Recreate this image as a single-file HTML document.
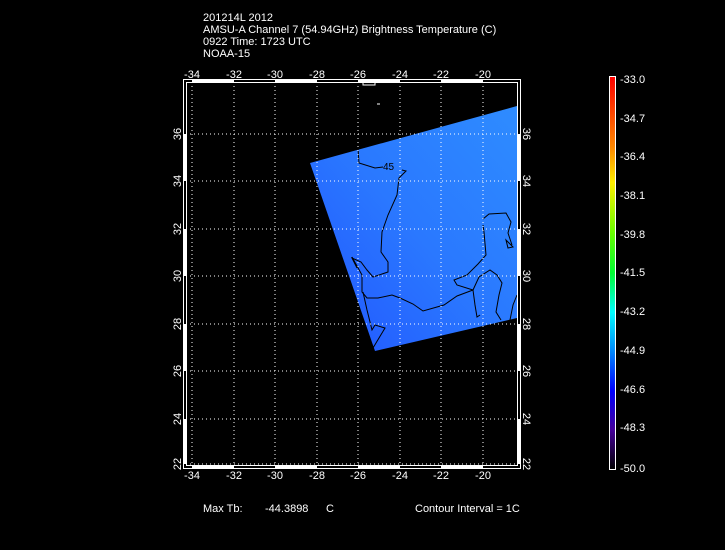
<!DOCTYPE html>
<html><head><style>
html,body{margin:0;padding:0;background:#000;width:725px;height:550px;overflow:hidden}
svg{display:block}
text{font-family:"Liberation Sans",sans-serif;font-size:11px;fill:#fff}
</style></head><body>
<svg width="725" height="550" viewBox="0 0 725 550">
<defs>
<linearGradient id="sw" x1="1" y1="0" x2="0" y2="1">
<stop offset="0" stop-color="#2e8cff"/>
<stop offset="0.5" stop-color="#2a78ff"/>
<stop offset="0.85" stop-color="#2460ff"/>
<stop offset="1" stop-color="#1a40ff"/>
</linearGradient>
<linearGradient id="cb" x1="0" y1="0" x2="0" y2="1">
<stop offset="0" stop-color="#ff0000"/>
<stop offset="0.18" stop-color="#ff8800"/>
<stop offset="0.27" stop-color="#ffee00"/>
<stop offset="0.4" stop-color="#66ff00"/>
<stop offset="0.5" stop-color="#00ff33"/>
<stop offset="0.6" stop-color="#00ffff"/>
<stop offset="0.7" stop-color="#0088ff"/>
<stop offset="0.8" stop-color="#0000ff"/>
<stop offset="0.9" stop-color="#440099"/>
<stop offset="1" stop-color="#000000"/>
</linearGradient>
</defs>
<text x="203" y="21">201214L 2012</text>
<text x="203" y="33">AMSU-A Channel 7 (54.94GHz) Brightness Temperature (C)</text>
<text x="203" y="45">0922 Time: 1723 UTC</text>
<text x="203" y="57">NOAA-15</text>

<polygon points="310,163 517,106 517,318 375,351" fill="url(#sw)"/>
<g fill="none" stroke="#000" stroke-width="1">
<path d="M358,148 L359,163 L375,168 L383,167 M402,170 L406,171 L399,178 L397,195 L388,215 L382,232 L381,252 L388,262 L388,272 L373,277 L367,270 L361,262 L352,258 L357,268"/>
<path d="M352,257 L362,275 L362,292 L367,298 L378,298 L392,295 L400,298 L413,304 L423,311 L444,305 L457,296 L473,290"/>
<path d="M363,292 L367,310 L372,330 L375,325 L385,328 L373,348"/>
<path d="M483,219 L489,214 L506,213 L511,222 L508,233 L512,245 M483,225 L484,232 L486,255 L478,264 L467,275 L454,280 L457,285 L473,290 L475,305 L477,317 L480,315 M473,290 L479,277 L490,270 L497,275 L502,283 L499,295 L496,312 L501,320 M517,295 L513,305 L510,320"/>
<path d="M506,240 L508,248 L513,247 Z"/>
</g>
<text x="383" y="170" style="font-size:10px;fill:#000">45</text>

<g stroke="#fff" stroke-width="1" stroke-dasharray="1,3" fill="none">
<path d="M192,82V466M234,82V466M275,82V466M317,82V466M358,82V466M400,82V466M441,82V466M483,82V466"/>
<path d="M186,134H518M186,181H518M186,229H518M186,276H518M186,324H518M186,371H518M186,419H518M186,464H518"/>
</g>
<rect x="183.5" y="79.5" width="337" height="389" fill="none" stroke="#fff"/>
<rect x="186.5" y="82.5" width="331" height="383" fill="none" stroke="#fff"/>
<g fill="#fff">
<rect x="192" y="80" width="42" height="2"/><rect x="275" y="80" width="42" height="2"/><rect x="358" y="80" width="42" height="2"/><rect x="441" y="80" width="42" height="2"/>
<rect x="192" y="466" width="42" height="2"/><rect x="275" y="466" width="42" height="2"/><rect x="358" y="466" width="42" height="2"/><rect x="441" y="466" width="42" height="2"/>
<rect x="184" y="419" width="2" height="45"/><rect x="184" y="324" width="2" height="47"/><rect x="184" y="229" width="2" height="47"/><rect x="184" y="134" width="2" height="47"/>
<rect x="518" y="419" width="2" height="45"/><rect x="518" y="324" width="2" height="47"/><rect x="518" y="229" width="2" height="47"/><rect x="518" y="134" width="2" height="47"/>
</g>
<path d="M363,81 h12 v4 h-12z M377,104 h3" stroke="#fff" fill="none"/>

<g text-anchor="middle">
<text x="192" y="78">-34</text><text x="234" y="78">-32</text><text x="275" y="78">-30</text><text x="317" y="78">-28</text><text x="358" y="78">-26</text><text x="400" y="78">-24</text><text x="441" y="78">-22</text><text x="483" y="78">-20</text>
<text x="192" y="479">-34</text><text x="234" y="479">-32</text><text x="275" y="479">-30</text><text x="317" y="479">-28</text><text x="358" y="479">-26</text><text x="400" y="479">-24</text><text x="441" y="479">-22</text><text x="483" y="479">-20</text>
</g>
<g text-anchor="middle">
<text transform="translate(181,464) rotate(-90)">22</text><text transform="translate(181,419) rotate(-90)">24</text><text transform="translate(181,371) rotate(-90)">26</text><text transform="translate(181,324) rotate(-90)">28</text><text transform="translate(181,276) rotate(-90)">30</text><text transform="translate(181,229) rotate(-90)">32</text><text transform="translate(181,181) rotate(-90)">34</text><text transform="translate(181,134) rotate(-90)">36</text>
<text transform="translate(523,464) rotate(90)">22</text><text transform="translate(523,419) rotate(90)">24</text><text transform="translate(523,371) rotate(90)">26</text><text transform="translate(523,324) rotate(90)">28</text><text transform="translate(523,276) rotate(90)">30</text><text transform="translate(523,229) rotate(90)">32</text><text transform="translate(523,181) rotate(90)">34</text><text transform="translate(523,134) rotate(90)">36</text>
</g>

<rect x="609.5" y="76.5" width="6" height="393" fill="url(#cb)" stroke="#fff"/>
<g>
<text x="620" y="83">-33.0</text><text x="620" y="122">-34.7</text><text x="620" y="160">-36.4</text><text x="620" y="199">-38.1</text><text x="620" y="238">-39.8</text><text x="620" y="276">-41.5</text><text x="620" y="315">-43.2</text><text x="620" y="354">-44.9</text><text x="620" y="393">-46.6</text><text x="620" y="431">-48.3</text><text x="620" y="472">-50.0</text>
</g>

<text x="203" y="512">Max Tb:</text>
<text x="265" y="512">-44.3898</text>
<text x="326" y="512">C</text>
<text x="415" y="512">Contour Interval = 1C</text>
</svg>
</body></html>
